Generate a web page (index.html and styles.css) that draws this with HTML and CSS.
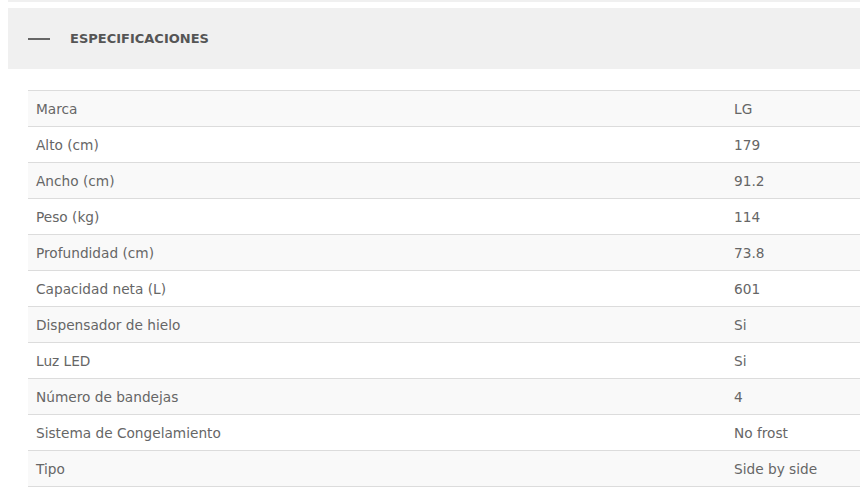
FILE: index.html
```html
<!DOCTYPE html>
<html>
  <head>
    <link rel="stylesheet" href="styles.css">
  </head>
  <body>
    <div class="top-strip"></div>
    <div class="specs">
      <div class="specs-header">
        <span class="dash"></span>
        <span class="specs-title">ESPECIFICACIONES</span>
      </div>
      <table class="specs-table">
        <tr><td class="label">Marca</td><td class="value">LG</td></tr>
        <tr><td class="label">Alto (cm)</td><td class="value">179</td></tr>
        <tr><td class="label">Ancho (cm)</td><td class="value">91.2</td></tr>
        <tr><td class="label">Peso (kg)</td><td class="value">114</td></tr>
        <tr><td class="label">Profundidad (cm)</td><td class="value">73.8</td></tr>
        <tr><td class="label">Capacidad neta (L)</td><td class="value">601</td></tr>
        <tr><td class="label">Dispensador de hielo</td><td class="value">Si</td></tr>
        <tr><td class="label">Luz LED</td><td class="value">Si</td></tr>
        <tr><td class="label">Número de bandejas</td><td class="value">4</td></tr>
        <tr><td class="label">Sistema de Congelamiento</td><td class="value">No frost</td></tr>
        <tr><td class="label">Tipo</td><td class="value">Side by side</td></tr>
      </table>
    </div>
  </body>
</html>
```

FILE: styles.css
```css
body {
  margin: 0 1px 0 8px;
  font-family: "DejaVu Sans", sans-serif;
  color: #5c5c5c;
  background: #fff;
}
.top-strip {
  height: 2px;
  background-color: #f0f0f0;
}
.specs {
  margin-top: 6px;
}
.specs-header {
  display: flex;
  align-items: center;
  height: 61px;
  padding-left: 20px;
  background-color: #f0f0f0;
}
.dash {
  width: 22px;
  height: 2px;
  background-color: #666;
}
.specs-title {
  margin-left: 20px;
  font-size: 13px;
  font-weight: 700;
  color: #555;
}
.specs-table {
  margin: 21px 0 0 20px;
  width: calc(100% - 20px);
  border-collapse: collapse;
  font-size: 13.7px;
}
.specs-table tr {
  height: 36px;
  border-top: 1px solid #dcdcdc;
  border-bottom: 1px solid #dcdcdc;
}
.specs-table tr:nth-child(odd) {
  background-color: #f9f9f9;
}
.specs-table td {
  padding: 0 8px;
  color: #666;
}
.label {
  width: 682px;
}
```
